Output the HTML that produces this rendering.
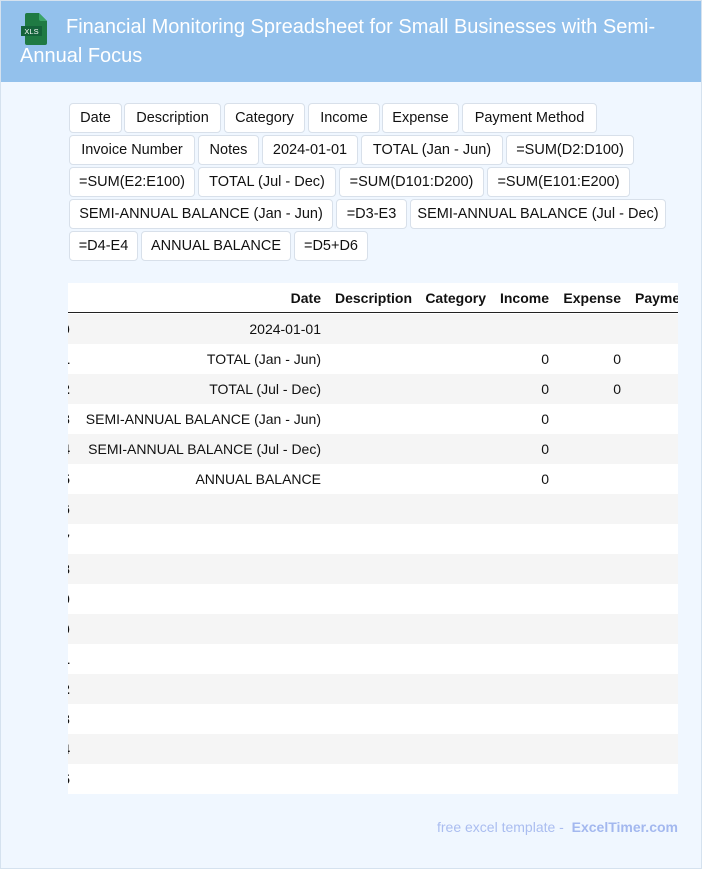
<!DOCTYPE html>
<html><head><meta charset="utf-8"><style>
*{margin:0;padding:0;box-sizing:border-box}
body{width:702px;height:869px;background:#f0f7ff;font-family:"Liberation Sans",sans-serif;position:relative;overflow:hidden}
.bd{position:absolute;left:0;top:0;width:702px;height:869px;border:1px solid #d5e2ef;pointer-events:none}
.hdr{position:absolute;left:0;top:0;width:702px;height:82px;background:#93c1ec}
.ttl{position:absolute;left:20px;top:13px;width:680px;color:#fff;font-size:20px;line-height:29px;text-indent:46px}
.t{position:absolute;height:30px;background:#fff;border:1px solid #d8e0ea;border-radius:4px;font-size:14.5px;color:#111;display:flex;align-items:center;justify-content:center;white-space:nowrap}
.tbl{position:absolute;left:68px;top:283px;width:610px;height:511px;background:#fff;overflow:hidden}
.r{position:absolute;left:0;width:610px;height:30px}
.g{background:#f5f5f5}
.c{position:absolute;font-size:14px;color:#111;line-height:30px;text-align:right;white-space:nowrap}
.h{font-weight:bold}
.foot{position:absolute;left:437px;top:819px;font-size:14px;color:#aabdf0}
</style></head><body>
<div class="hdr"></div>
<svg style="position:absolute;left:20px;top:13px" width="30" height="32" viewBox="0 0 30 32">
<path d="M7 0h12l8 8v22a2 2 0 0 1-2 2H7a2 2 0 0 1-2-2V2a2 2 0 0 1 2-2z" fill="#1f7a43"/>
<path d="M19 0l8 8h-6a2 2 0 0 1-2-2z" fill="#3aa466"/>
<rect x="1" y="13" width="21" height="10" fill="#14633a"/>
<text x="11.5" y="21" font-size="7.5" fill="#fff" text-anchor="middle" font-family="Liberation Sans">XLS</text>
</svg>
<div class="ttl">Financial Monitoring Spreadsheet for Small Businesses with Semi-Annual Focus</div>

<div class="t" style="left:69px;top:103px;width:53px">Date</div>
<div class="t" style="left:124px;top:103px;width:97px">Description</div>
<div class="t" style="left:224px;top:103px;width:81px">Category</div>
<div class="t" style="left:308px;top:103px;width:72px">Income</div>
<div class="t" style="left:382px;top:103px;width:77px">Expense</div>
<div class="t" style="left:462px;top:103px;width:135px">Payment Method</div>
<div class="t" style="left:69px;top:135px;width:126px">Invoice Number</div>
<div class="t" style="left:198px;top:135px;width:61px">Notes</div>
<div class="t" style="left:262px;top:135px;width:96px">2024-01-01</div>
<div class="t" style="left:361px;top:135px;width:142px">TOTAL (Jan - Jun)</div>
<div class="t" style="left:506px;top:135px;width:128px">=SUM(D2:D100)</div>
<div class="t" style="left:69px;top:167px;width:126px">=SUM(E2:E100)</div>
<div class="t" style="left:198px;top:167px;width:138px">TOTAL (Jul - Dec)</div>
<div class="t" style="left:339px;top:167px;width:145px">=SUM(D101:D200)</div>
<div class="t" style="left:487px;top:167px;width:143px">=SUM(E101:E200)</div>
<div class="t" style="left:69px;top:199px;width:264px">SEMI-ANNUAL BALANCE (Jan - Jun)</div>
<div class="t" style="left:336px;top:199px;width:71px">=D3-E3</div>
<div class="t" style="left:410px;top:199px;width:256px">SEMI-ANNUAL BALANCE (Jul - Dec)</div>
<div class="t" style="left:69px;top:231px;width:69px">=D4-E4</div>
<div class="t" style="left:141px;top:231px;width:150px">ANNUAL BALANCE</div>
<div class="t" style="left:294px;top:231px;width:74px">=D5+D6</div>

<div class="tbl">
<div class="r" style="top:0;border-bottom:1px solid #222"></div>
<div class="c h" style="right:357px;top:0">Date</div>
<div class="c h" style="right:266px;top:0">Description</div>
<div class="c h" style="right:192px;top:0">Category</div>
<div class="c h" style="right:129px;top:0">Income</div>
<div class="c h" style="right:57px;top:0">Expense</div>
<div class="c h" style="left:567px;top:0;text-align:left">Payment</div>

<div class="r g" style="top:31px"></div>
<div class="r" style="top:61px"></div>
<div class="r g" style="top:91px"></div>
<div class="r" style="top:121px"></div>
<div class="r g" style="top:151px"></div>
<div class="r" style="top:181px"></div>
<div class="r g" style="top:211px"></div>
<div class="r" style="top:241px"></div>
<div class="r g" style="top:271px"></div>
<div class="r" style="top:301px"></div>
<div class="r g" style="top:331px"></div>
<div class="r" style="top:361px"></div>
<div class="r g" style="top:391px"></div>
<div class="r" style="top:421px"></div>
<div class="r g" style="top:451px"></div>
<div class="r" style="top:481px"></div>

<div class="c h" style="left:-6px;top:31px">0</div>
<div class="c h" style="left:-6px;top:61px">1</div>
<div class="c h" style="left:-6px;top:91px">2</div>
<div class="c h" style="left:-6px;top:121px">3</div>
<div class="c h" style="left:-6px;top:151px">4</div>
<div class="c h" style="left:-6px;top:181px">5</div>
<div class="c h" style="left:-6px;top:211px">6</div>
<div class="c h" style="left:-6px;top:241px">7</div>
<div class="c h" style="left:-6px;top:271px">8</div>
<div class="c h" style="left:-6px;top:301px">9</div>
<div class="c h" style="left:-6px;top:331px">0</div>
<div class="c h" style="left:-6px;top:361px">1</div>
<div class="c h" style="left:-6px;top:391px">2</div>
<div class="c h" style="left:-6px;top:421px">3</div>
<div class="c h" style="left:-6px;top:451px">4</div>
<div class="c h" style="left:-6px;top:481px">5</div>

<div class="c" style="right:357px;top:31px">2024-01-01</div>
<div class="c" style="right:357px;top:61px">TOTAL (Jan - Jun)</div>
<div class="c" style="right:357px;top:91px">TOTAL (Jul - Dec)</div>
<div class="c" style="right:357px;top:121px">SEMI-ANNUAL BALANCE (Jan - Jun)</div>
<div class="c" style="right:357px;top:151px">SEMI-ANNUAL BALANCE (Jul - Dec)</div>
<div class="c" style="right:357px;top:181px">ANNUAL BALANCE</div>
<div class="c" style="right:129px;top:61px">0</div>
<div class="c" style="right:57px;top:61px">0</div>
<div class="c" style="right:129px;top:91px">0</div>
<div class="c" style="right:57px;top:91px">0</div>
<div class="c" style="right:129px;top:121px">0</div>
<div class="c" style="right:129px;top:151px">0</div>
<div class="c" style="right:129px;top:181px">0</div>
</div>

<div class="foot">free excel template - &nbsp;<b style="color:#a3b8ef">ExcelTimer.com</b></div>
<div class="bd"></div>
</body></html>
